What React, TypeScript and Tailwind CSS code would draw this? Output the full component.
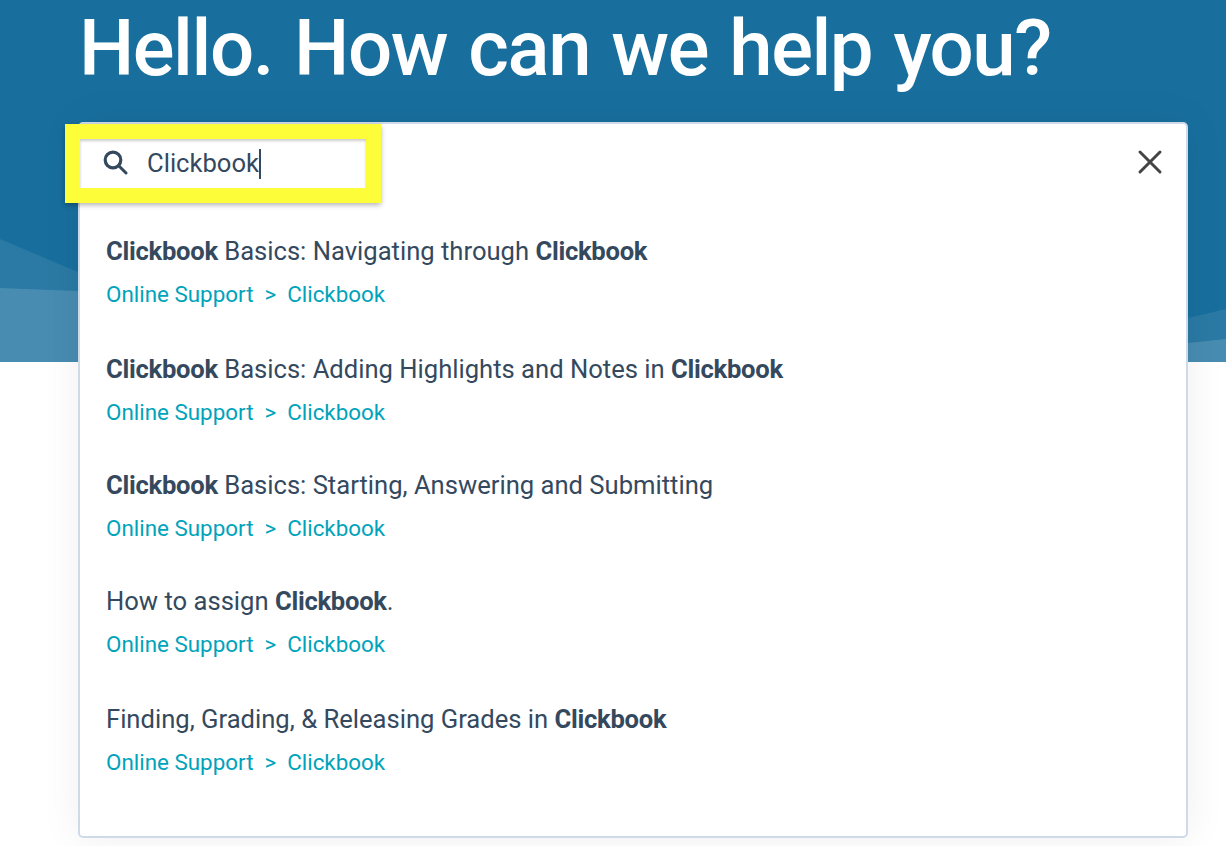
import React from 'react';
import { X } from 'lucide-react';

const results = [
  { parts: [['Clickbook', true], [' Basics: Navigating through ', false], ['Clickbook', true]], mt: 'mt-0' },
  { parts: [['Clickbook', true], [' Basics: Adding Highlights and Notes in ', false], ['Clickbook', true]], mt: 'mt-[43px]' },
  { parts: [['Clickbook', true], [' Basics: Starting, Answering and Submitting', false]], mt: 'mt-[41px]' },
  { parts: [['How to assign ', false], ['Clickbook', true], ['.', false]], mt: 'mt-[41px]' },
  { parts: [['Finding, Grading, & Releasing Grades in ', false], ['Clickbook', true]], mt: 'mt-[43px]' },
] as const;

function ResultRow({ parts, mt }: { parts: readonly (readonly [string, boolean])[]; mt: string }) {
  return (
    <div className={mt}>
      <div className="h-[32px] leading-[32px] text-[25.6px] text-[#34495e] whitespace-pre">
        {parts.map(([text, bold], i) => (
          <span key={i} className={bold ? 'font-bold tracking-[-0.27px]' : ''}>{text}</span>
        ))}
      </div>
      <div className="mt-[11px] h-[32px] leading-[32px] text-[22.4px] text-[#00a3bb] whitespace-pre">
        <span>Online Support</span>
        <span className="mx-[11px]">&gt;</span>
        <span>Clickbook</span>
      </div>
    </div>
  );
}

export default function App() {
  return (
    <div className="relative w-[1226px] h-[846px] overflow-hidden bg-white font-['Roboto',sans-serif]">
      {/* hero */}
      <div className="relative h-[362px] bg-[#186f9e] overflow-hidden">
        <svg className="absolute inset-0" width="1226" height="362" viewBox="0 0 1226 362">
          <path d="M0 239 L78 272 L78 362 L0 362 Z" fill="#ffffff" fillOpacity="0.08" />
          <path d="M0 288 L78 291 L78 362 L0 362 Z" fill="#ffffff" fillOpacity="0.14" />
          <path d="M1188 318 L1226 309 L1226 362 L1188 362 Z" fill="#ffffff" fillOpacity="0.08" />
          <path d="M1188 343 L1226 339 L1226 362 L1188 362 Z" fill="#ffffff" fillOpacity="0.14" />
        </svg>
        <h1 className="relative pl-[79px] pt-[4px] h-[94px] leading-[90px] text-[78px] tracking-[-1.5px] [word-spacing:3.4px] font-medium text-white whitespace-nowrap">
          Hello. How can we help you?
        </h1>
      </div>

      {/* results panel */}
      <div className="relative -mt-[240px] ml-[78px] w-[1110px] h-[716px] bg-white border-2 border-[#cfdae8] rounded-[5px] shadow-[0_0_40px_rgba(0,0,0,0.07)] pl-[26px] pt-[111px]">
        <X className="absolute right-[16px] top-[18px] text-[#444444]" size={40} strokeWidth={1.8} />
        {results.map((r, i) => (
          <ResultRow key={i} parts={r.parts} mt={r.mt} />
        ))}
      </div>

      {/* highlighted search input */}
      <div className="absolute left-[65px] top-[124px] w-[316px] h-[79px] border-[15px] border-[#fdfd3a] bg-white shadow-[0_2px_5px_rgba(0,0,0,0.3),inset_0_2px_3px_rgba(0,0,0,0.2)] flex items-center">
        <svg className="ml-[23px] -mt-[3px]" width="25" height="25" viewBox="0 0 25 25" fill="none" stroke="#34495e">
          <circle cx="10" cy="10" r="7.8" strokeWidth="3.2" />
          <path d="M15.5 15.5 L23 23" strokeWidth="3" strokeLinecap="round" />
        </svg>
        <span className="ml-[19px] text-[25.6px] text-[#34495e] leading-none">Clickbook</span>
        <span className="w-[1.5px] h-[30px] bg-[#34495e]" />
      </div>
    </div>
  );
}
